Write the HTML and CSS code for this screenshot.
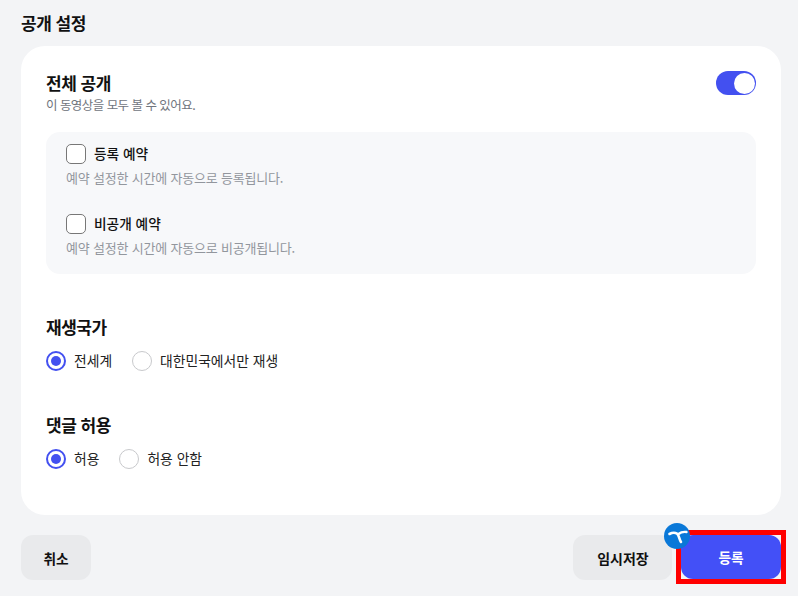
FILE: index.html
```html
<!DOCTYPE html>
<html lang="ko">
<head>
<meta charset="utf-8">
<title>공개 설정</title>
<link rel="stylesheet" href="styles.css">
</head>
<body>
<main class="page">
  <h1 class="page-title">공개 설정</h1>
  <section class="card">
    <div class="head">
      <div>
        <h2 class="section-title">전체 공개</h2>
        <p class="hint">이 동영상을 모두 볼 수 있어요.</p>
      </div>
      <span class="toggle"><span class="knob"></span></span>
    </div>
    <div class="panel">
      <div class="option">
        <div class="check-row"><span class="checkbox"></span><span class="check-label">등록 예약</span></div>
        <p class="option-hint">예약 설정한 시간에 자동으로 등록됩니다.</p>
      </div>
      <div class="option">
        <div class="check-row"><span class="checkbox"></span><span class="check-label">비공개 예약</span></div>
        <p class="option-hint">예약 설정한 시간에 자동으로 비공개됩니다.</p>
      </div>
    </div>
    <div class="group group-country">
      <h2 class="section-title">재생국가</h2>
      <div class="radios">
        <span class="radio on"></span><span class="radio-label">전세계</span>
        <span class="radio"></span><span class="radio-label">대한민국에서만 재생</span>
      </div>
    </div>
    <div class="group group-comment">
      <h2 class="section-title">댓글 허용</h2>
      <div class="radios">
        <span class="radio on"></span><span class="radio-label">허용</span>
        <span class="radio"></span><span class="radio-label">허용 안함</span>
      </div>
    </div>
  </section>
  <footer class="actions">
    <button class="btn btn-grey btn-cancel">취소</button>
    <div class="actions-right">
      <button class="btn btn-grey btn-draft">임시저장</button>
      <button class="btn btn-primary">등록
        <span class="highlight"></span>
        <span class="badge">
          <svg viewBox="0 0 26 26" width="26" height="26" fill="none" stroke="#fff" stroke-linecap="round"><path d="M5.5 11C8 9.6 11 9.4 13 10.6C15 11.8 14.8 15.5 17 19" stroke-width="2.6"/><path d="M14.5 11C16.5 9.4 19.5 8.6 22.5 9" stroke-width="2.4"/></svg>
        </span>
      </button>
    </div>
  </footer>
</main>
</body>
</html>
```
FILE: styles.css
```css
* { box-sizing: border-box; }
html, body { margin: 0; padding: 0; }
body {
  width: 798px;
  height: 596px;
  overflow: hidden;
  background: #f3f4f6;
  font-family: "Noto Sans CJK KR", "Noto Sans", sans-serif;
  color: #111;
}
.page { padding: 10px 17px 0 21px; }
.page-title { margin: 0; height: 36px; font-size: 17px; line-height: 25px; font-weight: 700; letter-spacing: -0.5px; }
.card {
  height: 469px;
  padding: 25px 25px 0 25px;
  background: #fff;
  border-radius: 24px;
}
.head { display: flex; justify-content: space-between; align-items: flex-start; height: 61px; }
.section-title { margin: 0; font-size: 17px; line-height: 24px; font-weight: 700; letter-spacing: -0.5px; }
.hint { margin: 1px 0 0; font-size: 12.5px; line-height: 18px; color: #70757d; letter-spacing: -0.55px; }
.toggle {
  display: flex;
  justify-content: flex-end;
  align-items: center;
  width: 40px;
  height: 24px;
  padding: 1px;
  border-radius: 12px;
  background: #4350f0;
}
.knob { width: 21px; height: 21px; border-radius: 50%; background: #fff; }
.panel {
  height: 142px;
  padding: 10px 20px 0;
  background: #f7f8fa;
  border-radius: 14px;
}
.option { height: 70px; }
.check-row { display: flex; align-items: center; gap: 8px; height: 24px; }
.checkbox { width: 20px; height: 20px; border: 1px solid #777; border-radius: 5px; background: #fff; }
.check-label { font-size: 13.7px; font-weight: 500; line-height: 20px; position: relative; top: -1px; }
.option-hint { margin: 3px 0 0; font-size: 13px; line-height: 18px; color: #92969d; letter-spacing: -0.2px; }
.group-country { margin-top: 41px; }
.group-comment { margin-top: 40px; }
.radios { display: flex; align-items: center; height: 24px; margin-top: 10px; }
.radio { width: 20px; height: 20px; border: 1px solid #c8c9cc; border-radius: 50%; background: #fff; }
.radio.on { border: 2px solid #4350f0; position: relative; }
.radio.on::after {
  content: "";
  position: absolute;
  inset: 3px;
  border-radius: 50%;
  background: #4350f0;
}
.radio-label { margin: 0 20px 0 8px; font-size: 13.8px; line-height: 20px; color: #222; position: relative; top: -1px; }
.actions { display: flex; justify-content: space-between; margin-top: 20px; }
.actions-right { display: flex; gap: 9px; }
.btn {
  height: 45px;
  padding: 0;
  border: 0;
  border-radius: 12px;
  font: 700 13.7px/20px "Noto Sans CJK KR", "Noto Sans", sans-serif;
  color: #111;
}
.btn-grey { background: #e9eaec; }
.btn-cancel { width: 70px; }
.btn-draft { width: 99px; padding-left: 1px; font-size: 14px; }
.btn-primary {
  position: relative;
  width: 100px;
  height: 44px;
  background: #4350f7;
  color: #fff;
}
.highlight {
  position: absolute;
  inset: -5px;
  border: 5px solid #f00;
}
.badge {
  position: absolute;
  left: -17px;
  top: -12px;
  display: flex;
  width: 26px;
  height: 26px;
  border-radius: 50%;
  background: #0a78d8;
}
```
